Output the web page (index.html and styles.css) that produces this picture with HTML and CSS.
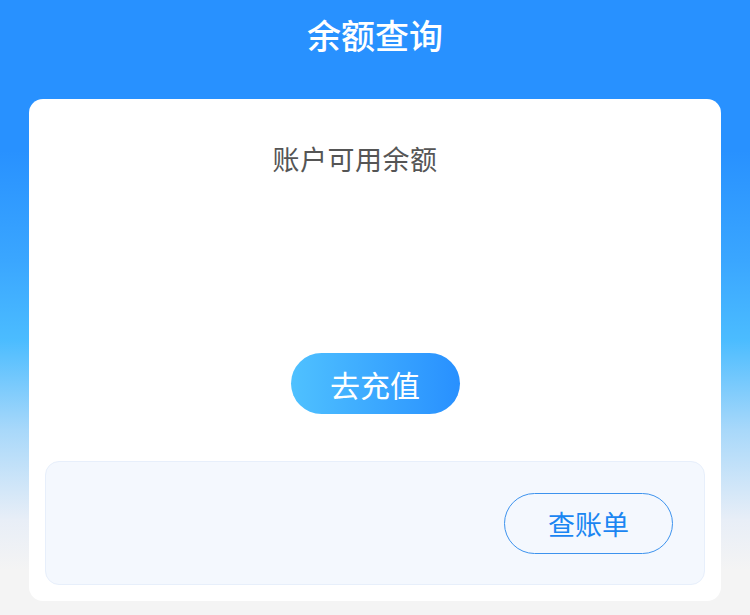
FILE: index.html
```html
<!DOCTYPE html>
<html lang="zh-CN">
<head>
    <meta charset="UTF-8">
    <meta name="viewport" content="width=device-width, initial-scale=1.0">
    <title>余额查询</title>
    <link rel="stylesheet" href="styles.css">
</head>
<body>
    <!-- 顶部标题 -->
    <div class="page">
        <div class="page-title">余额查询</div>

        <!-- 余额卡片 -->
        <div class="balance-card">
            <div class="balance-label">账户可用余额</div>
            <div class="balance-amount"></div>
            <button type="button" class="recharge-btn">去充值</button>

            <!-- 账单区域 -->
            <div class="bill-panel">
                <button type="button" class="bill-btn">查账单</button>
            </div>
        </div>
    </div>
</body>
</html>
```

FILE: styles.css
```css
html, body {
    margin: 0;
    padding: 0;
}

body {
    font-family: "Noto Sans CJK SC", "Noto Sans", sans-serif;
    background-color: #f4f4f4;
}

/* 页面背景渐变 */
.page {
    min-height: 615px;
    padding: 0 29px 14px;
    box-sizing: border-box;
    background: linear-gradient(180deg,
        #2891ff 0px,
        #2891ff 150px,
        #3aa6ff 260px,
        #4bbcff 340px,
        #a8d8fa 430px,
        #e8eef7 520px,
        #f4f4f4 570px);
}

.page-title {
    height: 70px;
    line-height: 70px;
    text-align: center;
    color: #fff;
    font-size: 34px;
    font-weight: 500;
}

/* 余额卡片 */
.balance-card {
    margin-top: 29px;
    background-color: #fff;
    border-radius: 14px;
    padding: 40px 16px 16px;
    display: flex;
    flex-direction: column;
    align-items: center;
}

.balance-label {
    font-size: 27px;
    color: #555;
    line-height: 40px;
    letter-spacing: 0.5px;
    margin-right: 40px;
}

.balance-amount {
    height: 174px;
}

.recharge-btn {
    width: 169px;
    height: 61px;
    border: none;
    border-radius: 31px;
    background: linear-gradient(90deg, #4fc1ff, #2890ff);
    color: #fff;
    font-family: inherit;
    font-size: 30px;
    cursor: pointer;
}

.bill-panel {
    align-self: stretch;
    margin-top: 47px;
    height: 122px;
    background-color: #f4f8fe;
    border: 1px solid #e7effb;
    border-radius: 14px;
    display: flex;
    justify-content: flex-end;
    align-items: center;
    padding-right: 31px;
}

.bill-btn {
    width: 169px;
    height: 61px;
    border: 1px solid #3d93ee;
    border-radius: 31px;
    background: transparent;
    color: #1a86f2;
    font-family: inherit;
    font-size: 27px;
    cursor: pointer;
}
```
